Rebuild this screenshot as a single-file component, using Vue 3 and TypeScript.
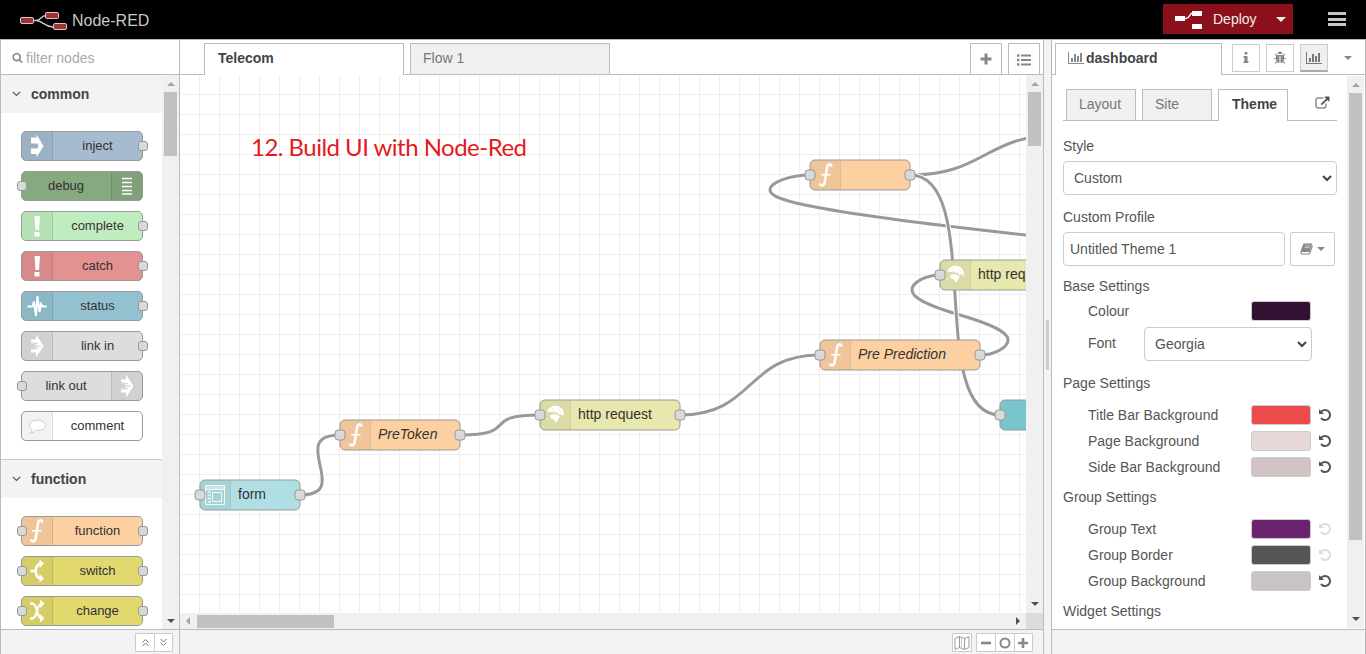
<script setup lang="ts">
interface PaletteNode {
  label: string
  color: string
  icon: string
  side?: 'right'
  input?: boolean
  output?: boolean
}
interface FlowNode {
  x: number
  y: number
  w: number
  color: string
  icon?: string
  label?: string
  italic?: boolean
  output?: boolean
}
interface ColourRow {
  label: string
  color: string
  faded?: boolean
}

const categories: { name: string; nodes: PaletteNode[] }[] = [
  {
    name: 'common',
    nodes: [
      { label: 'inject', color: '#a6bbcf', icon: 'inject', output: true },
      { label: 'debug', color: '#87a980', icon: 'debug', side: 'right', input: true },
      { label: 'complete', color: '#c0edc0', icon: 'alert', output: true },
      { label: 'catch', color: '#e49191', icon: 'alert', output: true },
      { label: 'status', color: '#94c1d0', icon: 'status', output: true },
      { label: 'link in', color: '#dddddd', icon: 'link', output: true },
      { label: 'link out', color: '#dddddd', icon: 'link', side: 'right', input: true },
      { label: 'comment', color: '#ffffff', icon: 'comment' },
    ],
  },
  {
    name: 'function',
    nodes: [
      { label: 'function', color: '#fdd0a2', icon: 'function', input: true, output: true },
      { label: 'switch', color: '#e2d96e', icon: 'switch', input: true, output: true },
      { label: 'change', color: '#e2d96e', icon: 'change', input: true, output: true },
    ],
  },
]

const wires: string[] = [
  'M120 420C174 420 106 360 160 360',
  'M280 360C341.8 360 298.2 340 360 340',
  'M500 340C575 340 565 280 640 280',
  'M800 280C814 280 828 272.5 828 265S814 250 780 240S732 222.5 732 215S746 200 760 200',
  'M847 160.2C605 134 590 122.5 590 115S610 100 630 100',
  'M730 100C805 100 805 60 880 60',
  'M730 100C805 100 745 340 820 340',
]

const flowNodes: FlowNode[] = [
  { x: 20, y: 405, w: 100, color: '#b0dfe3', icon: 'form', label: 'form', output: true },
  { x: 160, y: 345, w: 120, color: '#fdd0a2', icon: 'function', label: 'PreToken', italic: true, output: true },
  { x: 360, y: 325, w: 140, color: '#e7e7ae', icon: 'globe', label: 'http request', output: true },
  { x: 640, y: 265, w: 160, color: '#fdd0a2', icon: 'function', label: 'Pre Prediction', italic: true, output: true },
  { x: 760, y: 185, w: 140, color: '#e7e7ae', icon: 'globe', label: 'http request' },
  { x: 630, y: 85, w: 100, color: '#fdd0a2', icon: 'function', output: true },
  { x: 820, y: 325, w: 120, color: '#77c6cc' },
]

const pageRows: ColourRow[] = [
  { label: 'Title Bar Background', color: '#ec4b4b' },
  { label: 'Page Background', color: '#e6d7d8' },
  { label: 'Side Bar Background', color: '#d2c3c5' },
]
const groupRows: ColourRow[] = [
  { label: 'Group Text', color: '#6a236d', faded: true },
  { label: 'Group Border', color: '#555555', faded: true },
  { label: 'Group Background', color: '#c9c3c4' },
]
</script>

<template>
  <svg class="defs" width="0" height="0">
    <symbol id="i-inject" viewBox="0 0 30 30">
      <path d="M10 6.500h5.500V3.500l7 11.500-7 11.500v-3.500h-5.500v-5.500h6.500l1-2.500-1-2.500h-6.500z" fill="#fff" />
    </symbol>
    <symbol id="i-debug" viewBox="0 0 30 30">
      <path d="M11 7.500h10M11 11.500h10M11 15.500h10M11 19.500h10M11 23h10" stroke="#fff" stroke-width="1.300" fill="none" />
    </symbol>
    <symbol id="i-alert" viewBox="0 0 30 30">
      <path d="M13.500 5h5.500l-1 14h-3.500zM13.500 21h5v4.500h-5z" fill="#fff" />
    </symbol>
    <symbol id="i-status" viewBox="0 0 30 30">
      <path d="M6.500 15.500h5l1.500-5 2 14.500 1.500-20 2 16 1.500-8 1.500 2.500h4" fill="none" stroke="#fff" stroke-width="2" />
    </symbol>
    <symbol id="i-link" viewBox="0 0 30 30">
      <path d="M15 3.500l7.500 11.500L15 26.500v-5h-5v-4q4-.5 4-2.500t-4-2.500V8.500h5z" fill="#fff" />
      <path d="M10 11.500q4 0 4 3.500t-4 3.500M14 15h6M14 12l3 1M14 18l3-1" fill="none" stroke="#cfcfcf" stroke-width="1.200" />
    </symbol>
    <symbol id="i-comment" viewBox="0 0 30 30">
      <path d="M16.500 9c4.500 0 8 2.300 8 5.300s-3.500 5.300-8 5.300l-2-.2c-1.400 1.700-3 2.300-5.300 2.600 1.200-.9 2-1.900 2-3.400-1.700-1-2.700-2.600-2.700-4.300 0-3 3.500-5.300 8-5.300z" fill="#fff" stroke="#ccc" />
    </symbol>
    <symbol id="i-function" viewBox="0 0 30 30">
      <path d="M21.800 6.500C20.500 3 17.600 4 17 7.500L14.800 21.500C14.200 25.800 11.300 26.800 9.600 23.500" fill="none" stroke="#fff" stroke-width="2.500" />
      <path d="M11.200 14.800h9.300" stroke="#fff" stroke-width="1.600" />
    </symbol>
    <symbol id="i-switch" viewBox="0 0 30 30">
      <path d="M9.500 15h5q1-7.500 6-7.500M14.500 15q1 7.500 6 7.500" fill="none" stroke="#fff" stroke-width="2.700" />
      <path d="M18.500 3.500l4.500 4-4.500 4.500zM18.500 18l4.500 4.500-4.500 4z" fill="#fff" />
    </symbol>
    <symbol id="i-change" viewBox="0 0 30 30">
      <path d="M9 7.500h2.500q3 1 4.500 7.500t4.500 7.500M9 22.500h2.500q3-1 4.500-7.500t4.500-7.500" fill="none" stroke="#fff" stroke-width="2.300" />
      <path d="M19 3.500l4.500 4-4.500 4.500zM19 18l4.500 4.500-4.500 4z" fill="#fff" />
    </symbol>
    <symbol id="i-form" viewBox="0 0 30 30">
      <path d="M5.500 5.500h19v19h-19zM5 9.500h20M12.500 12.500h9v9h-9z" fill="none" stroke="#fff" stroke-opacity=".85" />
      <path d="M6 7.500h18" stroke="#fff" stroke-opacity=".4" stroke-width="3" />
      <path d="M9.500 11v13" stroke="#fff" stroke-opacity=".6" stroke-width="3" stroke-dasharray="2 1.300" />
    </symbol>
    <symbol id="i-globe" viewBox="0 0 30 30">
      <path d="M7.500 10.500C9 7.500 12 5.800 15.500 5.800C20 5.800 23.500 9 24 13.500L23 16.500L21.500 14L19.500 15L17.500 12.500L15.500 13L14.500 11L12.500 12.500L10.500 11.500L8.500 12.500z" fill="#fff" />
      <path d="M10 15.500L13 14L17.500 14.800L20 17L18.500 18.500L17.500 21L15.500 22.800L14 19.500L11 18.500z" fill="#fff" />
      <path d="M6.300 17l2 1.500-1 1.500zM12 9.500l2-1M18.500 9l2 2.500" fill="#fff" stroke="#dcdca5" stroke-width=".6" />
    </symbol>
    <symbol id="i-undo" viewBox="0 0 1536 1792">
      <path d="M1536 896q0 156-61 298t-164 245-245 164-298 61q-172 0-327-72.500t-264-204.500q-7-10-6.500-22.500t8.500-20.500l137-138q10-9 25-9 16 2 23 12 73 95 179 147t225 52q104 0 198.500-40.500t163.500-109.500 109.500-163.500 40.500-198.500-40.500-198.500-109.500-163.500-163.500-109.500-198.500-40.500q-98 0-188 35.500t-160 101.500l137 138q31 30 14 69-17 40-59 40h-448q-26 0-45-19t-19-45v-448q0-42 40-59 39-17 69 14l130 129q107-101 244.500-156.500t284.500-55.500q156 0 298 61t245 164 164 245 61 298z" />
    </symbol>
    <symbol id="i-bars" viewBox="0 0 2048 1792">
      <path d="M640 896v512h-256v-512h256zm384-512v1024h-256v-1024h256zm1024 1152v128h-2048v-1536h128v1408h1920zm-640-896v768h-256v-768h256zm384-384v1152h-256v-1152h256z" />
    </symbol>
  </svg>

  <div class="app">
    <header class="top">
      <svg class="logo" width="48" height="20" viewBox="0 0 48 20">
        <path d="M14 8.500h2c5 0 5-5 10-5M16 8.500c7 0 8 6.500 17 6.500" fill="none" stroke="#c7c7c7" stroke-width="1.500" />
        <g fill="#a03236" stroke="#d8c8c8"><rect x=".5" y="5.500" width="13" height="6" rx="1.500" /><rect x="25.500" y=".5" width="13" height="6" rx="1.500" /><rect x="33.500" y="11.500" width="13" height="6" rx="1.500" /></g>
      </svg>
      <span class="brand">Node-RED</span>
      <button class="deploy">
        <svg width="28" height="20" viewBox="0 0 28 20"><path d="M9 9.500h2c4 0 3-5.500 7-5.500" fill="none" stroke="#fff" stroke-width="1.500" /><path d="M0 7h10v5H0zM17 2h10v5H17zM17 15h10v5H17z" fill="#fff" /></svg>
        <span>Deploy</span>
        <i class="caret"></i>
      </button>
      <div class="burger"><i></i><i></i><i></i></div>
    </header>

    <main class="body">
      <section class="palette">
        <div class="search">
          <svg width="11" height="11" viewBox="0 0 1792 1792"><path d="M1216 832q0-185-131.500-316.500t-316.500-131.500-316.500 131.500-131.500 316.500 131.500 316.500 316.500 131.500 316.500-131.500 131.500-316.500zm512 832q0 52-38 90t-90 38q-54 0-90-38l-343-342q-179 124-399 124-143 0-273.500-55.500t-225-150-150-225-55.500-273.500 55.500-273.500 150-225 225-150 273.500-55.500 273.500 55.500 225 150 150 225 55.500 273.500q0 220-124 399l343 343q37 37 37 90z" fill="#888" /></svg>
          <span>filter nodes</span>
        </div>
        <div class="scroller">
          <div class="cats">
            <div v-for="cat in categories" :key="cat.name" class="cat">
              <div class="cathead">
                <svg width="9" height="6" viewBox="0 0 9 6"><path d="M.8.8l3.700 3.700L8.200.8" fill="none" stroke="#555" stroke-width="1.200" /></svg>
                <b>{{ cat.name }}</b>
              </div>
              <div class="catbody">
                <div v-for="n in cat.nodes" :key="n.label" class="pnode" :class="{ flip: n.side }" :style="{ background: n.color }">
                  <span class="picon"><svg width="30" height="30"><use :href="'#i-' + n.icon" /></svg></span>
                  <span class="plabel">{{ n.label }}</span>
                  <i v-if="n.input" class="port in"></i>
                  <i v-if="n.output" class="port out"></i>
                </div>
              </div>
            </div>
          </div>
          <div class="vbar">
            <i class="arr up"></i><i class="thumb palthumb"></i><i class="arr down"></i>
          </div>
        </div>
        <footer class="foot">
          <div class="group">
            <span class="fbtn"><svg width="9" height="9" viewBox="0 0 9 9"><path d="M1.500 4.500l3-3 3 3M1.500 8l3-3 3 3" fill="none" stroke="#777" /></svg></span>
            <span class="fbtn"><svg width="9" height="9" viewBox="0 0 9 9"><path d="M1.500 1l3 3 3-3M1.500 4.500l3 3 3-3" fill="none" stroke="#777" /></svg></span>
          </div>
        </footer>
      </section>

      <section class="workspace">
        <nav class="wtabs">
          <div class="wtab active">Telecom</div>
          <div class="wtab">Flow 1</div>
          <div class="wbtn first"><svg width="12" height="12" viewBox="0 0 12 12"><path d="M6 .5v11M.5 6h11" stroke="#888" stroke-width="3" /></svg></div>
          <div class="wbtn"><svg width="14" height="12" viewBox="0 0 14 12"><path d="M4 1.500h10M4 6h10M4 10.500h10" stroke="#888" stroke-width="1.800" /><path d="M0 1.500h2.400M0 6h2.400M0 10.500h2.400" stroke="#888" stroke-width="2.400" /></svg></div>
        </nav>
        <div class="wmid">
          <svg class="canvas" width="846" height="538" viewBox="0 0 846 538">
            <g class="grid">
              <rect v-for="i in 42" :key="'v' + i" :x="i * 20 - 1" y="0" width="1" height="538" />
              <rect v-for="i in 26" :key="'h' + i" x="0" :y="i * 20 - 1" width="846" height="1" />
            </g>
            <g v-for="(d, i) in wires" :key="'w' + i" fill="none">
              <path :d="d" stroke="#fff" stroke-width="5" />
              <path :d="d" stroke="#999" stroke-width="3" />
            </g>
            <g v-for="(n, i) in flowNodes" :key="'n' + i" :transform="`translate(${n.x} ${n.y})`">
              <rect :width="n.w" height="30" rx="5" :fill="n.color" stroke="#999" />
              <template v-if="n.icon">
                <path d="M5 .5h25v29H5a4.500 4.500 0 0 1-4.500-4.500V5A4.500 4.500 0 0 1 5 .5z" fill="#000" fill-opacity=".05" />
                <path d="M30.500.5v29" stroke="#000" stroke-opacity=".1" />
                <use :href="'#i-' + n.icon" width="30" height="30" />
              </template>
              <text v-if="n.label" x="38" y="19" :class="{ italic: n.italic }">{{ n.label }}</text>
              <rect class="fport" x="-5" y="10" width="10" height="10" rx="3" />
              <rect v-if="n.output" class="fport" :x="n.w - 5" y="10" width="10" height="10" rx="3" />
            </g>
            <text class="note" x="71" y="81" textLength="276">12. Build UI with Node-Red</text>
          </svg>
          <div class="vbar">
            <i class="arr up"></i><i class="thumb wsthumb"></i><i class="arr down raised"></i>
          </div>
        </div>
        <div class="hbar"><i class="arr left"></i><i class="hthumb"></i><i class="arr right"></i><i class="corner"></i></div>
        <footer class="foot">
          <div class="group">
            <span class="fbtn"><svg width="16" height="14" viewBox="0 0 16 14"><path d="M1 2.500l4.500-2 5 2 4.500-2v11l-4.500 2-5-2-4.500 2zM5.500.5v11M10.500 2.500v11" fill="none" stroke="#999" /><path d="M7.500 1.500v10" stroke="#efb9a8" /></svg></span>
          </div>
          <div class="group zoom">
            <span class="fbtn"><svg width="12" height="12" viewBox="0 0 12 12"><path d="M1 6h10" stroke="#888" stroke-width="2.600" /></svg></span>
            <span class="fbtn wide"><svg width="12" height="12" viewBox="0 0 12 12"><circle cx="6" cy="6" r="4.500" fill="none" stroke="#888" stroke-width="2" /></svg></span>
            <span class="fbtn"><svg width="12" height="12" viewBox="0 0 12 12"><path d="M1 6h10M6 1v10" stroke="#888" stroke-width="2.600" /></svg></span>
          </div>
        </footer>
      </section>

      <div class="separator"><i></i></div>

      <section class="sidebar">
        <nav class="stabs">
          <div class="stab"><svg width="16" height="14" fill="#888"><use href="#i-bars" /></svg><b>dashboard</b></div>
          <span class="sbtn"><svg width="14" height="14" viewBox="0 0 1792 1792" fill="#888"><path d="M1216 1344v128q0 26-19 45t-45 19h-512q-26 0-45-19t-19-45v-128q0-26 19-45t45-19h64v-384h-64q-26 0-45-19t-19-45v-128q0-26 19-45t45-19h384q26 0 45 19t19 45v576h64q26 0 45 19t19 45zm-128-1152v192q0 26-19 45t-45 19h-256q-26 0-45-19t-19-45v-192q0-26 19-45t45-19h256q26 0 45 19t19 45z" /></svg></span>
          <span class="sbtn"><svg width="14" height="14" viewBox="0 0 1792 1792" fill="#888"><path d="M1696 960q0 26-19 45t-45 19h-224q0 171-67 290l208 209q19 19 19 45t-19 45q-18 19-45 19t-45-19l-198-197q-5 5-15 13t-42 28.500-65 36.500-82 29-97 13v-896h-128v896q-51 0-101.500-13.500t-87-33-66-39-43.500-32.500l-15-14-183 207q-20 21-48 21-24 0-43-16-19-18-20.500-44.500t15.500-46.500l202-227q-58-114-58-274h-224q-26 0-45-19t-19-45 19-45 45-19h224v-294l-173-173q-19-19-19-45t19-45 45-19 45 19l173 173h844l173-173q19-19 45-19t45 19 19 45-19 45l-173 173v294h224q26 0 45 19t19 45zm-480-576h-640q0-133 93.500-226.500t226.500-93.500 226.500 93.500 93.500 226.500z" /></svg></span>
          <span class="sbtn on"><svg width="16" height="14" fill="#777"><use href="#i-bars" /></svg></span>
          <i class="caret grey"></i>
        </nav>
        <div class="smid">
          <div class="content">
            <div class="itabs">
              <div class="itab">Layout</div>
              <div class="itab">Site</div>
              <div class="itab active">Theme</div>
              <svg class="ext" width="15" height="14" viewBox="0 0 1920 1792" fill="#555"><path d="M1472 989v320q0 119-84.500 203.500t-203.500 84.500h-832q-119 0-203.500-84.500t-84.500-203.500v-832q0-119 84.500-203.500t203.500-84.500h704q14 0 23 9t9 23v64q0 14-9 23t-23 9h-704q-66 0-113 47t-47 113v832q0 66 47 113t113 47h832q66 0 113-47t47-113v-320q0-14 9-23t23-9h64q14 0 23 9t9 23zm384-864v512q0 26-19 45t-45 19-45-19l-176-176-652 652q-10 10-23 10t-23-10l-114-114q-10-10-10-23t10-23l652-652-176-176q-19-19-19-45t19-45 45-19h512q26 0 45 19t19 45z" /></svg>
            </div>
            <div class="lbl style">Style</div>
            <div class="select full"><span>Custom</span><svg width="10" height="7" viewBox="0 0 10 7"><path d="M1 1l4 4 4-4" fill="none" stroke="#444" stroke-width="2" /></svg></div>
            <div class="lbl profile">Custom Profile</div>
            <div class="prow">
              <div class="input">Untitled Theme 1</div>
              <div class="book">
                <svg width="13" height="12" viewBox="0 0 13 12"><path d="M3.500.5h8.700L9.500 9H1.200q-.8-.5-.3-1.700z" fill="#888" /><path d="M1 8.500q-.5 2.500 1.500 2.500h7L12.500 2.500" fill="none" stroke="#888" stroke-width="1.100" /><path d="M5 2.800h5M4.500 4.600h5" stroke="#ddd" stroke-width=".8" /></svg>
                <i class="caret small"></i>
              </div>
            </div>
            <div class="lbl base">Base Settings</div>
            <div class="crow colour"><span>Colour</span><i class="swatch" :style="{ background: '#331133' }"></i></div>
            <div class="frow"><span>Font</span><div class="select"><span>Georgia</span><svg width="10" height="7" viewBox="0 0 10 7"><path d="M1 1l4 4 4-4" fill="none" stroke="#444" stroke-width="2" /></svg></div></div>
            <div class="lbl page">Page Settings</div>
            <div class="rows">
              <div v-for="r in pageRows" :key="r.label" class="crow">
                <span>{{ r.label }}</span><i class="swatch" :style="{ background: r.color }"></i>
                <svg class="undo" width="12" height="14"><use href="#i-undo" /></svg>
              </div>
            </div>
            <div class="lbl sect">Group Settings</div>
            <div class="rows">
              <div v-for="r in groupRows" :key="r.label" class="crow">
                <span>{{ r.label }}</span><i class="swatch" :style="{ background: r.color }"></i>
                <svg class="undo" :class="{ faded: r.faded }" width="12" height="14"><use href="#i-undo" /></svg>
              </div>
            </div>
            <div class="lbl sect">Widget Settings</div>
          </div>
          <div class="vbar sbar">
            <i class="arr up"></i><i class="thumb sbthumb"></i><i class="arr down raised"></i>
          </div>
        </div>
        <footer class="foot"></footer>
      </section>
    </main>
  </div>
</template>

<style>
body {
  margin: 0;
  overflow: hidden;
}
</style>

<style scoped>
* {
  box-sizing: border-box;
}
.defs {
  position: absolute;
}
.app {
  width: 1366px;
  height: 654px;
  display: flex;
  flex-direction: column;
  font: 14px/20px 'Liberation Sans', Arial, sans-serif;
  color: #555;
  background: #f3f3f3;
  overflow: hidden;
}
i {
  display: block;
  flex: none;
}
svg {
  display: block;
  flex: none;
}
.top {
  height: 39px;
  flex: none;
  background: #000;
  display: flex;
  align-items: flex-start;
}
.logo {
  margin: 12px 4px 0 20px;
}
.brand {
  font-size: 16px;
  color: #c7c7c7;
  margin-top: 11px;
}
.deploy {
  margin: 4px 35px 0 auto;
  width: 130px;
  height: 30px;
  border: 0;
  padding: 0 7px 0 12px;
  background: #8c101c;
  color: #eee;
  font: inherit;
  display: flex;
  align-items: center;
}
.deploy span {
  margin: 0 auto 0 10px;
}
.caret {
  border: 5px solid transparent;
  border-top-color: #eee;
  border-bottom: 0;
}
.burger {
  width: 18px;
  margin: 12px 20px 0 0;
  display: grid;
  gap: 2.5px;
}
.burger i {
  height: 3px;
  background: #c7c7c7;
}
.body {
  flex: 1;
  display: flex;
  min-height: 0;
}
section {
  display: flex;
  flex-direction: column;
  border: 1px solid #bbb;
  border-bottom: 0;
  background: #fff;
}
.palette {
  width: 180px;
}
.search {
  height: 35px;
  border-bottom: 1px solid #bbb;
  display: flex;
  align-items: center;
  gap: 3px;
  padding: 1px 0 0 11px;
  color: #aaa;
}
.scroller {
  height: 554px;
  display: flex;
}
.cats {
  width: 161px;
  overflow: hidden;
}
.cathead {
  height: 38px;
  background: #f3f3f3;
  display: flex;
  align-items: center;
  gap: 10px;
  padding-left: 11px;
  color: #444;
}
.catbody {
  padding: 18px 0 18px 20px;
  display: grid;
  gap: 10px;
  border-bottom: 1px solid #ccc;
}
.pnode {
  position: relative;
  width: 122px;
  height: 30px;
  border: 1px solid #999;
  border-radius: 5px;
  display: flex;
  font-size: 13px;
  color: #333;
}
.flip {
  flex-direction: row-reverse;
}
.picon {
  width: 31px;
  background: rgba(0, 0, 0, 0.05);
  border-right: 1px solid rgba(0, 0, 0, 0.1);
  border-radius: 4px 0 0 4px;
}
.picon svg {
  margin: -1px 0 0 -1px;
}
.flip .picon {
  border-right: 0;
  border-left: 1px solid rgba(0, 0, 0, 0.1);
  border-radius: 0 4px 4px 0;
}
.plabel {
  flex: 1;
  text-align: center;
  line-height: 28px;
}
.flip .plabel {
  padding-right: 1px;
}
.port {
  position: absolute;
  top: 9px;
  width: 10px;
  height: 10px;
  background: #d9d9d9;
  border: 1px solid #999;
  border-radius: 3px;
}
.in {
  left: -5px;
}
.out {
  right: -6px;
}
.vbar {
  width: 17px;
  background: #f0f0f0;
  display: flex;
  flex-direction: column;
  align-items: center;
  flex: none;
}
.arr {
  border: 4px solid transparent;
}
.up {
  border-bottom-color: #a3a3a3;
  border-top: 0;
  margin: 7px 0 6px;
}
.down {
  border-top-color: #505050;
  border-bottom: 0;
  margin: auto 0 6px;
}
.raised {
  margin-bottom: 7px;
}
.left {
  border-right-color: #a3a3a3;
  border-left: 0;
  margin: 0 7px 0 6px;
}
.right {
  border-left-color: #505050;
  border-right: 0;
  margin: 0 6px 0 auto;
}
.thumb {
  width: 13px;
  background: #c1c1c1;
}
.palthumb {
  height: 64px;
}
.wsthumb {
  height: 54px;
}
.sbthumb {
  height: 447px;
}
.foot {
  flex: 1;
  border-top: 1px solid #bbb;
  background: #f3f3f3;
  display: flex;
  justify-content: flex-end;
  gap: 4px;
  padding: 3px 6px 0 0;
}
.group {
  height: 19px;
  display: flex;
  border: 1px solid #ccc;
  background: #fff;
}
.fbtn {
  width: 18px;
  display: flex;
  align-items: center;
  justify-content: center;
}
.fbtn + .fbtn {
  border-left: 1px solid #ccc;
}
.zoom svg {
  margin-left: -1px;
}
.wide {
  width: 19px;
}
.workspace {
  width: 864px;
  border-left: 0;
}
.workspace .foot {
  padding-right: 10px;
}
.wtabs {
  height: 35px;
  flex: none;
  border-bottom: 1px solid #bbb;
  display: flex;
  padding: 3px 3px 0 24px;
}
.wtab {
  width: 200px;
  height: 31px;
  border: 1px solid #bbb;
  border-bottom: 0;
  background: #f0f0f0;
  color: #777;
  padding: 4px 0 0 12px;
  margin-right: 6px;
}
.wtab.active {
  height: 32px;
  background: #fff;
  color: #444;
  font-weight: bold;
  padding-left: 13px;
}
.wbtn {
  width: 32px;
  height: 31px;
  border: 1px solid #bbb;
  border-bottom: 0;
  display: flex;
  align-items: center;
  justify-content: center;
  padding-top: 2px;
}
.first {
  margin: 0 6px 0 auto;
  padding-top: 0;
}
.wmid {
  height: 538px;
  flex: none;
  display: flex;
}
.grid {
  fill: #eee;
}
.canvas text {
  fill: #333;
  font-size: 14px;
}
.canvas .italic {
  font-style: italic;
}
.canvas .note {
  font: 24px Lato, sans-serif;
  fill: #e5191c;
}
.fport {
  fill: #d9d9d9;
  stroke: #999;
}
.hbar {
  height: 16px;
  flex: none;
  background: #f0f0f0;
  display: flex;
  align-items: center;
}
.hthumb {
  width: 137px;
  height: 13px;
  background: #c1c1c1;
}
.corner {
  width: 17px;
  height: 16px;
  background: #dcdcdc;
}
.separator {
  width: 7px;
  border-top: 1px solid #bbb;
  background: #f3f3f3;
  padding: 280px 0 0 2px;
}
.separator i {
  width: 3px;
  height: 50px;
  background: #ccc;
}
.sidebar {
  width: 315px;
}
.stabs {
  height: 35px;
  flex: none;
  border-bottom: 1px solid #bbb;
  display: flex;
  align-items: flex-start;
  padding: 3px 0 0 3px;
}
.stab {
  width: 167px;
  height: 32px;
  border: 1px solid #bbb;
  border-bottom: 0;
  background: #fff;
  color: #444;
  display: flex;
  gap: 2px;
  padding: 4px 0 0 12px;
  margin-right: 10px;
}
.stab svg {
  margin-top: 3px;
}
.sbtn {
  width: 28px;
  height: 28px;
  margin: 1px 6px 0 0;
  border: 1px solid #ccc;
  display: flex;
  align-items: center;
  justify-content: center;
}
.sbtn.on {
  background: #efefef;
  border-bottom: 2px solid #aaa;
  margin-right: 16px;
}
.grey {
  border-width: 4px 4px 0;
  border-top-color: #888;
  margin-top: 13px;
}
.smid {
  height: 554px;
  flex: none;
  display: flex;
  justify-content: space-between;
}
.content {
  width: 285px;
  padding: 14px 0 0 11px;
}
.itabs {
  height: 32px;
  border-bottom: 1px solid #bbb;
  display: flex;
  align-items: flex-start;
  padding-left: 3px;
}
.itab {
  width: 70px;
  height: 31px;
  border: 1px solid #bbb;
  border-bottom: 0;
  background: #f0f0f0;
  color: #777;
  padding: 4px 0 0 12px;
  margin-right: 6px;
}
.itab.active {
  height: 32px;
  background: #fff;
  color: #444;
  font-weight: bold;
  padding-left: 13px;
}
.ext {
  margin: 7px 0 0 21px;
}
.lbl {
  height: 20px;
}
.style {
  margin-top: 15px;
}
.select {
  width: 168px;
  height: 34px;
  border: 1px solid #ccc;
  border-radius: 4px;
  display: flex;
  align-items: center;
  justify-content: space-between;
  padding: 0 4px 0 10px;
}
.full {
  width: 274px;
  margin-top: 5px;
}
.profile {
  margin-top: 12px;
}
.prow {
  margin-top: 5px;
  display: flex;
  gap: 5px;
}
.input {
  width: 222px;
  height: 34px;
  border: 1px solid #ccc;
  border-radius: 4px;
  line-height: 32px;
  padding-left: 6px;
}
.book {
  width: 45px;
  height: 34px;
  border: 1px solid #ccc;
  border-radius: 2px;
  display: flex;
  align-items: center;
  justify-content: center;
  gap: 4px;
}
.small {
  border-width: 4px 4px 0;
  border-top-color: #888;
}
.base {
  margin-top: 10px;
}
.crow {
  height: 26px;
  padding-left: 25px;
  display: flex;
  align-items: center;
}
.crow span {
  width: 163px;
}
.colour {
  margin-top: 2px;
}
.swatch {
  width: 60px;
  height: 20px;
  border: 1px solid #ccc;
  border-radius: 3px;
}
.undo {
  margin-left: 8px;
  fill: #555;
}
.faded {
  fill: #ddd;
}
.frow {
  margin-top: 3px;
  padding-left: 25px;
  display: flex;
}
.frow > span {
  width: 56px;
  line-height: 32px;
}
.page {
  margin-top: 12px;
}
.rows {
  margin-top: 9px;
}
.sect {
  margin-top: 7px;
}
.sbar {
  height: 552px;
  margin: 1px 1px 0 0;
}
</style>
